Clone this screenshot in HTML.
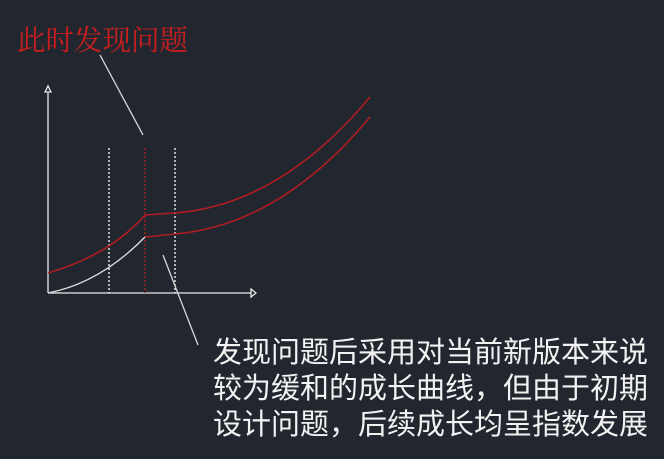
<!DOCTYPE html>
<html><head><meta charset="utf-8"><style>
html,body{margin:0;padding:0;background:#22272f;width:664px;height:459px;overflow:hidden}
.t{position:absolute;font-family:"Liberation Sans","Noto Sans CJK SC",sans-serif;white-space:nowrap}
</style></head><body>
<svg width="664" height="459" style="position:absolute;left:0;top:0">
<g fill="none" stroke-width="1.3">
<line x1="100" y1="55" x2="143" y2="135" stroke="#d8d8d8"/>
<line x1="48" y1="293" x2="48" y2="92" stroke="#e8e8e8"/>
<polygon points="45,92 51,92 48,86" stroke="#e8e8e8"/>
<line x1="48" y1="293" x2="251" y2="293" stroke="#e8e8e8"/>
<polygon points="251,289 251,297 256,293" stroke="#e8e8e8"/>
<line x1="109" y1="148" x2="109" y2="293" stroke="#fff" stroke-dasharray="2,2"/>
<line x1="175" y1="148" x2="175" y2="293" stroke="#fff" stroke-dasharray="2,2"/>
<line x1="145" y1="148" x2="145" y2="293" stroke="#b02020" stroke-dasharray="2,2"/>
<path d="M48,293 Q100,283 145,237" stroke="#e0e0e0"/>
<path d="M48,273 Q110,255 145,215 L175,213 Q280,205 370,97" stroke="#b01c22" stroke-width="1.6"/>
<path d="M145,237 L175,234 Q280,225 370,117" stroke="#b01c22" stroke-width="1.6"/>
<line x1="163" y1="255" x2="198" y2="345" stroke="#d8d8d8"/>
</g></svg>
<div class="t" style="left:17px;top:18px;font-size:28.5px;color:#c81e1e;font-family:'Liberation Serif','Noto Serif CJK SC',serif">此时发现问题</div>
<div class="t" style="left:213px;top:335px;font-size:29px;line-height:36px;color:#f2f2f2">发现问题后采用对当前新版本来说<br>较为缓和的成长曲线，但由于初期<br>设计问题，后续成长均呈指数发展</div>
</body></html>
